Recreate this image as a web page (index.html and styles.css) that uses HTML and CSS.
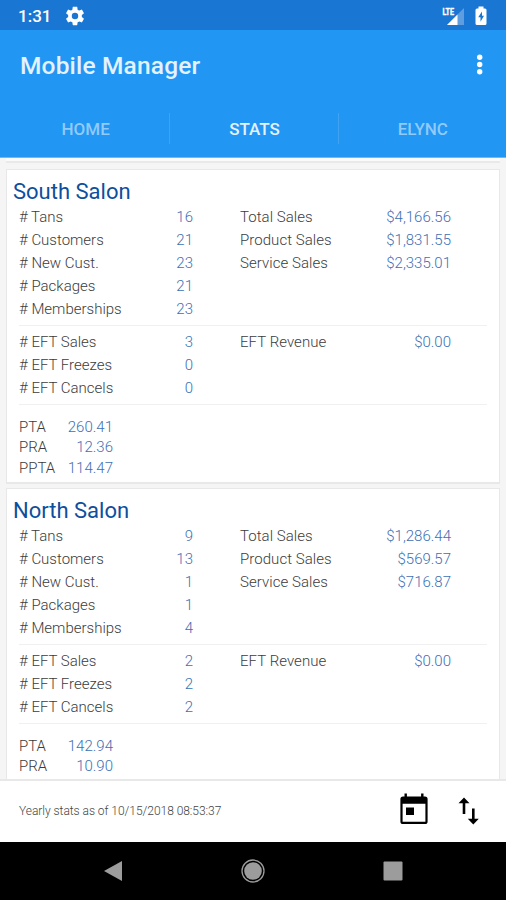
FILE: index.html
```html
<!DOCTYPE html>
<html lang="en">
<head>
  <meta charset="UTF-8">
  <meta name="viewport" content="width=device-width, initial-scale=1.0">
  <title>Mobile Manager</title>
  <link rel="stylesheet" href="styles.css">
</head>
<body>
  <div class="status-bar">
    <span class="clock">1:31</span>
    <svg class="gear" width="22" height="22" viewBox="0 0 24 24"><path fill="#fff" d="M19.43 12.98c.04-.32.07-.64.07-.98s-.03-.66-.07-.98l2.11-1.65c.19-.15.24-.42.12-.64l-2-3.46c-.12-.22-.39-.3-.61-.22l-2.49 1c-.52-.4-1.08-.73-1.69-.98l-.38-2.65C14.46 2.18 14.25 2 14 2h-4c-.25 0-.46.18-.49.42l-.38 2.65c-.61.25-1.17.59-1.69.98l-2.49-1c-.23-.09-.49 0-.61.22l-2 3.46c-.13.22-.07.49.12.64l2.11 1.65c-.04.32-.07.65-.07.98s.03.66.07.98l-2.11 1.65c-.19.15-.24.42-.12.64l2 3.46c.12.22.39.3.61.22l2.49-1c.52.4 1.08.73 1.69.98l.38 2.65c.03.24.24.42.49.42h4c.25 0 .46-.18.49-.42l.38-2.65c.61-.25 1.17-.59 1.69-.98l2.49 1c.23.09.49 0 .61-.22l2-3.46c.12-.22.07-.49-.12-.64l-2.11-1.65zM12 15.500a3.500 3.500 0 1 1 0-7 3.500 3.500 0 0 1 0 7z"/></svg>
    <svg class="signal" width="23" height="20" viewBox="0 0 23 20">
      <path fill="#5e9ee0" d="M22 2v17H5z"/>
      <path fill="#1976d2" d="M0 0h13v10H0z"/>
      <path fill="#fff" d="M15.500 8.500V19H5z"/>
      <text x="0.500" y="8.500" class="lte" textLength="11.500" lengthAdjust="spacingAndGlyphs">LTE</text>
    </svg>
    <svg class="battery" width="12" height="20" viewBox="0 0 12 20">
      <path fill="#fff" d="M3.500 .5h5V2.500H10a1.500 1.500 0 0 1 1.500 1.500v13.500A1.500 1.500 0 0 1 10 19H2a1.500 1.500 0 0 1-1.500-1.500V4A1.500 1.500 0 0 1 2 2.500h1.500z"/>
      <path fill="#1976d2" d="M7 5.500L3.200 11.200h2.300v4.600L9 9.800H7z"/>
    </svg>
  </div>

  <header class="app-bar">
    <h1>Mobile Manager</h1>
    <svg class="more" width="8" height="22" viewBox="0 0 8 22" fill="#fff"><circle cx="3.700" cy="3.200" r="2.700"/><circle cx="3.700" cy="10.500" r="2.700"/><circle cx="3.700" cy="17.800" r="2.700"/></svg>
  </header>
  <nav class="tabs">
    <div class="tab">HOME</div>
    <div class="tab active">STATS</div>
    <div class="tab">ELYNC</div>
  </nav>

  <main class="content">
    <div class="card-edge"></div>
    <section class="card">
      <h2>South Salon</h2>
      <div class="stats">
        <span># Tans</span><b>16</b><span>Total Sales</span><b>$4,166.56</b>
        <span># Customers</span><b>21</b><span>Product Sales</span><b>$1,831.55</b>
        <span># New Cust.</span><b>23</b><span>Service Sales</span><b>$2,335.01</b>
        <span># Packages</span><b>21</b><i></i><i></i>
        <span># Memberships</span><b>23</b><i></i><i></i>
      </div>
      <div class="stats eft">
        <span># EFT Sales</span><b>3</b><span>EFT Revenue</span><b>$0.00</b>
        <span># EFT Freezes</span><b>0</b><i></i><i></i>
        <span># EFT Cancels</span><b>0</b><i></i><i></i>
      </div>
      <div class="averages">
        <span>PTA</span><b>260.41</b>
        <span>PRA</span><b>12.36</b>
        <span>PPTA</span><b>114.47</b>
      </div>
    </section>

    <section class="card">
      <h2>North Salon</h2>
      <div class="stats">
        <span># Tans</span><b>9</b><span>Total Sales</span><b>$1,286.44</b>
        <span># Customers</span><b>13</b><span>Product Sales</span><b>$569.57</b>
        <span># New Cust.</span><b>1</b><span>Service Sales</span><b>$716.87</b>
        <span># Packages</span><b>1</b><i></i><i></i>
        <span># Memberships</span><b>4</b><i></i><i></i>
      </div>
      <div class="stats eft">
        <span># EFT Sales</span><b>2</b><span>EFT Revenue</span><b>$0.00</b>
        <span># EFT Freezes</span><b>2</b><i></i><i></i>
        <span># EFT Cancels</span><b>2</b><i></i><i></i>
      </div>
      <div class="averages">
        <span>PTA</span><b>142.94</b>
        <span>PRA</span><b>10.90</b>
      </div>
    </section>
  </main>

  <footer class="bottom-bar">
    <p>Yearly stats as of 10/15/2018 08:53:37</p>
    <svg class="calendar" width="28" height="32" viewBox="0 0 28 32">
      <path fill="#000" fill-rule="evenodd" d="M4.500 .5h2.400v3h14.200v-3h2.400v3H25a2.600 2.600 0 0 1 2.600 2.600v22.300A2.600 2.600 0 0 1 25 31H3a2.600 2.600 0 0 1-2.600-2.600V6.100A2.600 2.600 0 0 1 3 3.500h1.500zM2.600 10.700v18h22.800v-18z"/>
      <path fill="#000" d="M6 14.500h8V22H6z"/>
    </svg>
    <svg class="sort" width="22" height="28" viewBox="0 0 22 28">
      <path fill="#000" d="M6 .5l5.500 5.700H7.300V17H4.700V6.200H.5zM14 11.500h2.600v10.300h4.200l-5.500 5.700-5.500-5.700H14z"/>
    </svg>
  </footer>

  <div class="nav-bar">
    <svg width="20" height="22" viewBox="0 0 20 22"><path fill="#9c9c9c" d="M19 1v20L1 11z"/></svg>
    <svg width="24" height="24" viewBox="0 0 24 24"><circle cx="12" cy="12" r="11" fill="none" stroke="#9c9c9c" stroke-width="1.300"/><circle cx="12" cy="12" r="8.800" fill="#9c9c9c"/></svg>
    <svg width="20" height="20" viewBox="0 0 20 20"><rect x="0.500" y="0.500" width="19" height="19" rx="1" fill="#9c9c9c"/></svg>
  </div>
</body>
</html>
```
FILE: styles.css
```css
* {
  box-sizing: border-box;
}

body {
  margin: 0;
  height: 900px;
  display: flex;
  flex-direction: column;
  overflow: hidden;
  font-family: Roboto, "Liberation Sans", sans-serif;
  background-color: #f5f5f5;
}

svg {
  display: block;
  flex: none;
}

/* Status bar */
.status-bar {
  flex: none;
  height: 30px;
  display: flex;
  align-items: center;
  padding: 1px 19px 0 18px;
  background-color: #1976d2;
  color: #fff;
}

.clock {
  width: 46px;
  font-size: 17px;
  font-weight: 500;
}

.signal {
  margin-left: auto;
  margin-right: 10px;
}

.lte {
  font-size: 9.5px;
  font-weight: 700;
  fill: #fff;
  stroke: #fff;
  stroke-width: 0.4px;
}

/* App bar */
.app-bar {
  flex: none;
  height: 70px;
  display: flex;
  align-items: center;
  justify-content: space-between;
  padding: 0 22px 0 20px;
  background-color: #2196f3;
}

.app-bar h1 {
  margin: 0;
  font-size: 24.5px;
  font-weight: 500;
  letter-spacing: 0.17px;
  color: #e3f2fd;
}

.tabs {
  flex: none;
  height: 58px;
  display: flex;
  padding-left: 1px;
  background-color: #2196f3;
  border-bottom: 1px solid #8fb0cc;
}

.tab {
  width: 169px;
  margin: 13px 0;
  padding-left: 1px;
  line-height: 32px;
  text-align: center;
  font-size: 17px;
  font-weight: 500;
  color: #90caf9;
}

.tab + .tab {
  border-left: 1px solid #3fa2f3;
}

.tab.active {
  color: #e3f2fd;
}

/* Salon cards */
.content {
  flex: 1;
  min-height: 0;
  overflow: hidden;
  padding: 0 6px;
}

.card-edge {
  height: 5px;
  margin-bottom: 6px;
  background-color: #fafafa;
  border-bottom: 2px solid #e9e9e9;
}

.card {
  height: 315px;
  margin-bottom: 4px;
  padding: 9px 12px 0;
  background-color: #fff;
  border: 1px solid #e8e8e8;
  border-bottom-width: 2px;
}

.card h2 {
  margin: 0 0 1px -6px;
  font-size: 22px;
  line-height: 26px;
  font-weight: 400;
  color: #0d4f9e;
}

.stats {
  display: grid;
  grid-template-columns: 100px 74px 119px 139px;
  grid-auto-rows: 23px;
  line-height: 23px;
  font-size: 15px;
  font-weight: 300;
  color: #3c3c3c;
  white-space: nowrap;
}

.stats span:nth-child(4n + 3) {
  padding-left: 47px;
  letter-spacing: 0.05px;
}

.stats b,
.averages b {
  font-weight: 300;
  text-align: right;
  color: #4070b4;
}

.eft {
  margin-top: 4px;
  padding: 5px 0 4px;
  border-top: 1px solid #f0f0f0;
  border-bottom: 1px solid #f0f0f0;
}

.averages {
  display: grid;
  grid-template-columns: 44px 50px;
  grid-auto-rows: 20.3px;
  line-height: 20px;
  margin-top: 12px;
  font-size: 15px;
  font-weight: 300;
  color: #3c3c3c;
}

/* Footer with date and sort buttons */
.bottom-bar {
  flex: none;
  height: 63px;
  display: flex;
  align-items: center;
  padding: 0 26px 2px 19px;
  background-color: #fff;
  border-top: 2px solid #e8e8e8;
}

.bottom-bar p {
  flex: 1;
  margin: 0;
  font-size: 12px;
  font-weight: 300;
  letter-spacing: -0.04px;
  color: #444;
}

.calendar {
  margin-right: 30px;
  margin-bottom: 3px;
}

.nav-bar {
  flex: none;
  height: 58px;
  display: flex;
  align-items: center;
  justify-content: space-between;
  padding: 0 103px;
  background-color: #000;
}
```
